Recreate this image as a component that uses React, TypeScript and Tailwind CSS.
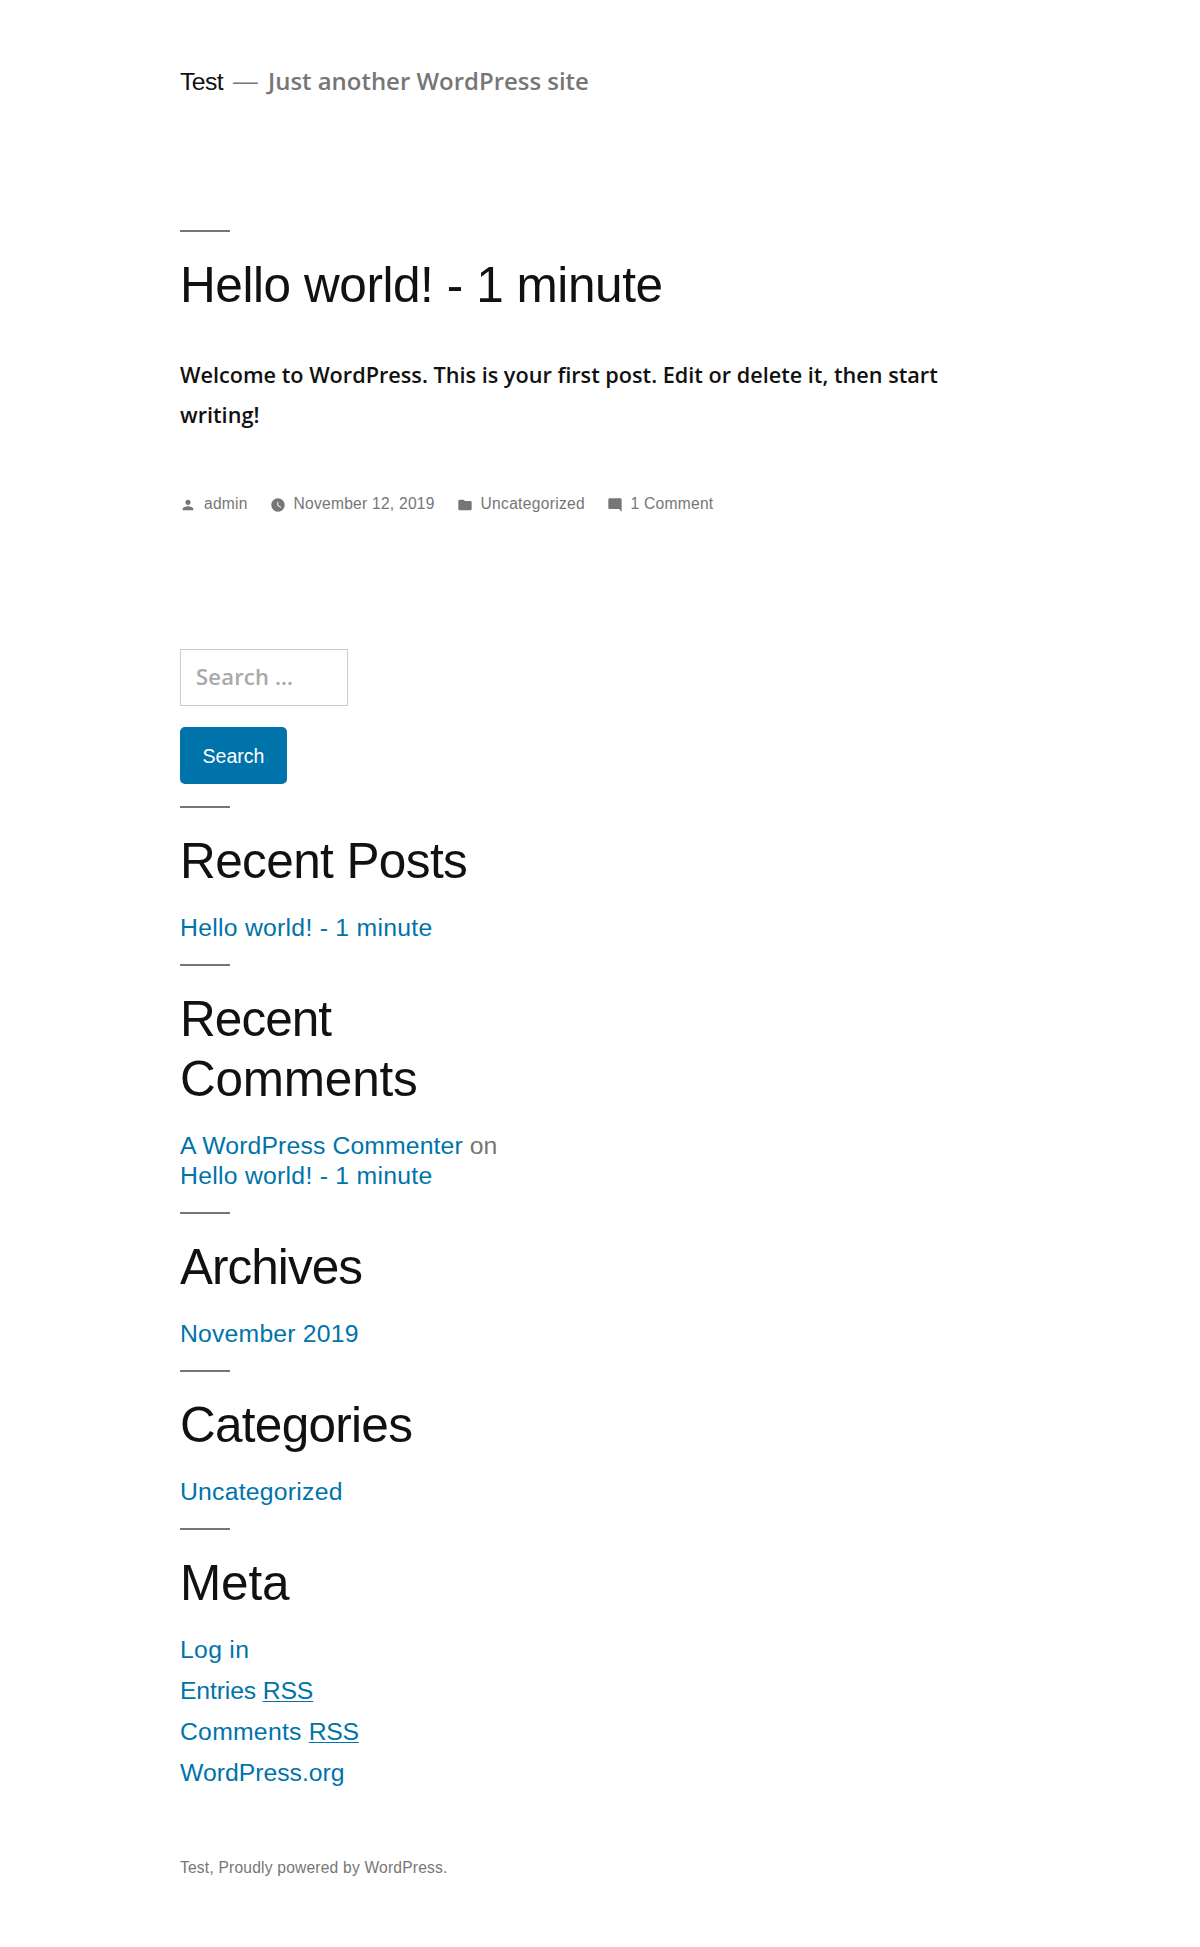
import type { ReactNode } from "react";

const iconPaths = {
  person:
    "M12 12c2.21 0 4-1.79 4-4s-1.79-4-4-4-4 1.79-4 4 1.79 4 4 4zm0 2c-2.67 0-8 1.34-8 4v2h16v-2c0-2.66-5.33-4-8-4z",
  clock:
    "M12 2C6.5 2 2 6.5 2 12s4.5 10 10 10 10-4.5 10-10S17.5 2 12 2zm4.2 14.2L11 13V7h1.5v5.2l4.5 2.7-.8 1.3z",
  folder:
    "M10 4H4c-1.1 0-1.99.9-1.99 2L2 18c0 1.1.9 2 2 2h16c1.1 0 2-.9 2-2V8c0-1.1-.9-2-2-2h-8l-2-2z",
  comment:
    "M21.99 4c0-1.1-.89-2-1.99-2H4c-1.1 0-2 .9-2 2v12c0 1.1.9 2 2 2h14l4 4-.01-18z",
};

function Meta({
  icon,
  className,
  children,
}: {
  icon: keyof typeof iconPaths;
  className: string;
  children: ReactNode;
}) {
  return (
    <span className={`flex shrink-0 items-start whitespace-nowrap ${className}`}>
      <svg viewBox="0 0 24 24" className="mt-[3px] mr-2 size-4 shrink-0 fill-current">
        <path d={iconPaths[icon]} />
      </svg>
      <a href="#">{children}</a>
    </span>
  );
}

function Rule() {
  return <div className="h-[2px] w-[50px] bg-[#767676]" />;
}

function Widget({ title, children }: { title: ReactNode; children: ReactNode }) {
  return (
    <section className="pb-[21px]">
      <Rule />
      <h2 className="mt-[23px] text-[49.5px] leading-[60px] text-[#111]">{title}</h2>
      <ul className="mt-[22px] flex flex-col gap-[11px] text-[24.75px] leading-[30px] whitespace-nowrap text-[#0073aa]">
        {children}
      </ul>
    </section>
  );
}

export default function App() {
  return (
    <div className="min-h-[1947px] bg-white pl-[180px] font-['Liberation_Sans',Arial,sans-serif] text-[#111]">
      <header className="flex h-24 items-baseline pt-[66px] text-[24.75px] leading-[30px]">
        <a href="#" className="w-[53px] tracking-[-0.6px]">Test</a>
        <span className="relative -top-px w-[33px] text-[#767676]">—</span>
        <p className="pl-[2px] font-['Open_Sans',sans-serif] text-[23.95px] font-semibold text-[#767676]">
          Just another WordPress site
        </p>
      </header>

      <article className="mt-[134px]">
        <Rule />
        <h1 className="mt-[23px] text-[49.5px] leading-[60px] tracking-[-0.43px] whitespace-nowrap">
          Hello world! - 1 minute
        </h1>
        <p className="mt-[40px] w-[780px] font-['Open_Sans',sans-serif] text-[21.66px] leading-[39.5px] font-semibold">
          Welcome to WordPress. This is your first post. Edit or delete it, then start writing!
        </p>
        <footer className="mt-[60px] flex h-5 text-[15.6px] leading-5 text-[#767676]">
          <Meta icon="person" className="w-[89.5px] tracking-[0.25px]">admin</Meta>
          <Meta icon="clock" className="w-[187px] tracking-[0.25px]">November 12, 2019</Meta>
          <Meta icon="folder" className="w-[150px] tracking-[0.3px]">Uncategorized</Meta>
          <Meta icon="comment" className="tracking-[0.26px]">1 Comment</Meta>
        </footer>
      </article>

      <aside className="mt-[135px] w-[330px]">
        <form className="flex h-[157px] flex-col items-start" onSubmit={(e) => e.preventDefault()}>
          <input
            type="search"
            placeholder="Search …"
            className="h-[57px] w-[168px] border border-[#ccc] pt-0 pr-2 pb-[3px] pl-[15px] font-['Open_Sans',sans-serif] text-[22px] font-semibold tracking-[0.2px] placeholder:text-[#a9a9a9]"
          />
          <button className="mt-[21px] h-[57px] w-[107px] rounded-[5px] bg-[#0073aa] pt-[2px] text-[19.55px] text-white">
            Search
          </button>
        </form>

        <Widget title={<span className="tracking-[-0.6px]">Recent Posts</span>}>
          <li><a href="#" className="tracking-[0.27px]">Hello world! - 1 minute</a></li>
        </Widget>
        <Widget
          title={
            <>
              <span className="block tracking-[-0.95px]">Recent</span>
              <span className="block tracking-[-0.22px]">Comments</span>
            </>
          }
        >
          <li>
            <a href="#" className="tracking-[0.13px]">A WordPress Commenter</a>
            <span className="text-[#767676]"> on</span>
            <br />
            <a href="#" className="tracking-[0.27px]">Hello world! - 1 minute</a>
          </li>
        </Widget>
        <Widget title={<span className="tracking-[-0.98px]">Archives</span>}>
          <li><a href="#" className="tracking-[0.2px]">November 2019</a></li>
        </Widget>
        <Widget title={<span className="tracking-[-0.72px]">Categories</span>}>
          <li><a href="#" className="tracking-[0.24px]">Uncategorized</a></li>
        </Widget>
        <Widget title={<span className="tracking-[-0.17px]">Meta</span>}>
          <li><a href="#" className="tracking-[0.3px]">Log in</a></li>
          <li>
            <a href="#" className="tracking-[-0.15px]">
              Entries <abbr className="underline decoration-1 underline-offset-2">RSS</abbr>
            </a>
          </li>
          <li>
            <a href="#">
              <span className="tracking-[0.25px]">Comments </span>
              <abbr className="tracking-[-0.3px] underline decoration-1 underline-offset-2">RSS</abbr>
            </a>
          </li>
          <li><a href="#">WordPress.org</a></li>
        </Widget>
      </aside>

      <footer className="mt-[49px] text-[15.6px] leading-5 tracking-[0.2px] text-[#767676]">
        Test, Proudly powered by WordPress.
      </footer>
    </div>
  );
}
